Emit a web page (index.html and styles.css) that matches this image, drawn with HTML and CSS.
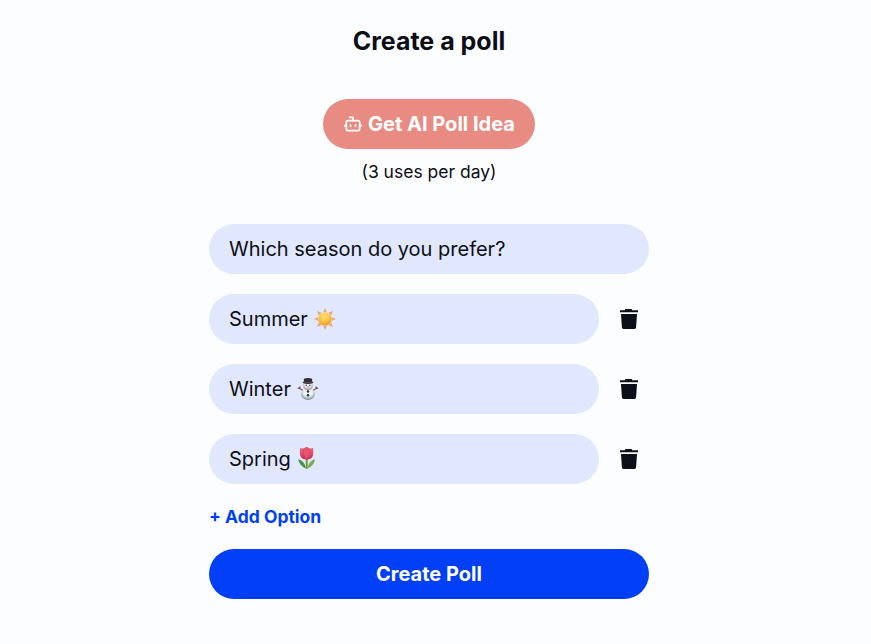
FILE: index.html
```html
<!DOCTYPE html>
<html lang="en">
<head>
<meta charset="utf-8">
<title>Create a poll</title>
<link rel="stylesheet" href="styles.css">
</head>
<body>
<svg width="0" height="0" class="defs">
<defs>
<radialGradient id="sun" cx=".45" cy=".3" r=".75"><stop offset="0" stop-color="#ffe27a"/><stop offset=".55" stop-color="#fdc23a"/><stop offset="1" stop-color="#ee8f2c"/></radialGradient>
<radialGradient id="snow" cx=".5" cy=".35" r=".7"><stop offset="0" stop-color="#fff"/><stop offset=".5" stop-color="#e2e9ea"/><stop offset="1" stop-color="#647b86"/></radialGradient>
<linearGradient id="petal" x1="0" y1="0" x2="0" y2="1"><stop offset="0" stop-color="#ee7389"/><stop offset="1" stop-color="#cf2750"/></linearGradient>
</defs>
<symbol id="trash" viewBox="0 0 20 20"><path d="M1 1.300h5V.6Q6 0 6.600 0h5.800q.6 0 .6.600v.7h6v2H1z"/><path d="M2 4.900h16l-.9 13.400q-.1 1.700-1.600 1.700h-11q-1.500 0-1.600-1.700z"/></symbol>
</svg>
<main class="page">
<h1>Create a poll</h1>
<button class="idea"><svg viewBox="0 0 24 24" class="bot"><path d="M12 8V4H8M2 14h2M20 14h2M15 13v2M9 13v2"/><rect x="4" y="8" width="16" height="12" rx="2"/></svg><span>Get AI Poll Idea</span></button>
<p class="uses">(3 uses per day)</p>
<form class="form">
<div class="field">Which season do you prefer?</div>
<div class="row"><div class="field">Summer <svg class="emoji" viewBox="0 0 22 22"><path fill="#e9a878" d="M11-.2l1.900 4.500H9.100zM11 22l1.900-4.300H9.100zM-.2 11l4.500-1.900v3.800zM22.200 11l-4.500-1.900v3.800zM2.800 3l4.800 1.800-2.800 2.800zM19.200 3l-4.800 1.800 2.800 2.800zM2.800 19l4.800-1.800-2.800-2.800zM19.200 19l-4.800-1.800 2.800-2.800z"/><circle cx="11" cy="11" r="6.600" fill="url(#sun)"/></svg></div><svg class="trash"><use href="#trash"/></svg></div>
<div class="row"><div class="field">Winter <svg class="emoji" viewBox="0 0 22 22"><path d="M6.500 13L3 10.500.8 10M3 10.500L2.700 8.500M15.500 13l3.500-2.500 2.200-.5M19 10.500l.3-2" fill="none" stroke="#875a53" stroke-width="1.300"/><ellipse cx="11" cy="16" rx="7" ry="5.900" fill="url(#snow)"/><circle cx="11" cy="7.700" r="4.700" fill="url(#snow)"/><path d="M7 .8Q11-.8 15 .8l.3 3 1.200.8q-.5 1.400-5.500 1.400T5.500 4.600l1.200-.8z" fill="#302e36"/><path d="M7 4q4 1 8 0" fill="none" stroke="#71515a" stroke-width=".7"/><g fill="#292a30"><circle cx="9.300" cy="7.200" r=".7"/><circle cx="12.900" cy="7.200" r=".7"/><circle cx="11" cy="13.500" r="1.200"/><circle cx="11" cy="17.300" r="1.200"/></g><path d="M10.500 8l2.800 1-2.800.8z" fill="#e98445"/></svg></div><svg class="trash"><use href="#trash"/></svg></div>
<div class="row"><div class="field">Spring <svg class="emoji tulip" viewBox="0 0 22 22"><path d="M8.800 12h1.900v9.800H8.800z" fill="#6d9c43"/><path d="M9.300 21.800Q3 19.500 1 12.300q6.500 1.400 8.300 9.500z" fill="#4b9547"/><path d="M10.200 21.800q6.300-2 8-9.500-6.200 1.400-8 9.500z" fill="#79ad4b"/><path d="M3.200.8l2.900 1L9.600 0l3.500 1.800L16 .8q.8 4.200-.1 7.700-1.100 4-6.300 4T3.300 8.500q-.9-3.500-.1-7.700z" fill="url(#petal)"/><path d="M6.100 1.800q-1 6 3.500 10.700 4.500-4.700 3.500-10.700L9.600 0z" fill="#e4546f"/><path d="M6.100 1.800q-1 6 3.500 10.700 4.500-4.700 3.500-10.700" fill="none" stroke="#c93559" stroke-width=".4"/></svg></div><svg class="trash"><use href="#trash"/></svg></div>
<a class="add">+ Add Option</a>
<button class="create" type="button">Create Poll</button>
</form>
</main>
</body>
</html>
```
FILE: styles.css
```css
*{box-sizing:border-box}
body{margin:0;background:#fcfdff;color:#0c0e18;font-family:Inter,sans-serif}
.defs{position:absolute}
.page{width:440px;margin-left:209px;display:flex;flex-direction:column;align-items:center}
h1{margin:26px 0 43px;font-size:25px;line-height:30px;font-weight:700}
button{border:0;height:50px;border-radius:25px;color:#fff;font:700 20px/24px Inter,sans-serif}
.idea{width:212px;padding:0;background:#e88b82;display:flex;align-items:center;justify-content:center;gap:5px}
.bot{width:20px;height:20px;fill:none;stroke:#fff;stroke-width:2;stroke-linecap:round;stroke-linejoin:round}
.uses{margin:12px 0 41px;font-size:17.5px;line-height:22px}
.form{width:100%;display:flex;flex-direction:column;gap:20px}
.field{height:50px;border-radius:25px;background:#e1e7fc;padding:0 20px;font-size:20px;line-height:50px;flex:none;display:flex;align-items:center;white-space:pre}
.row{display:flex;align-items:center;gap:20px}
.row .field{width:390px}
.trash{width:20px;height:20px;fill:#0c0e18}
.emoji{width:22px;height:22px;margin-bottom:1px}
.tulip{margin:0 0 2px 1px}
.add{color:#003ff5;font-weight:700;font-size:17.5px;line-height:22px;margin-top:2px}
.create{background:#003ff5;margin-top:1px}
```
